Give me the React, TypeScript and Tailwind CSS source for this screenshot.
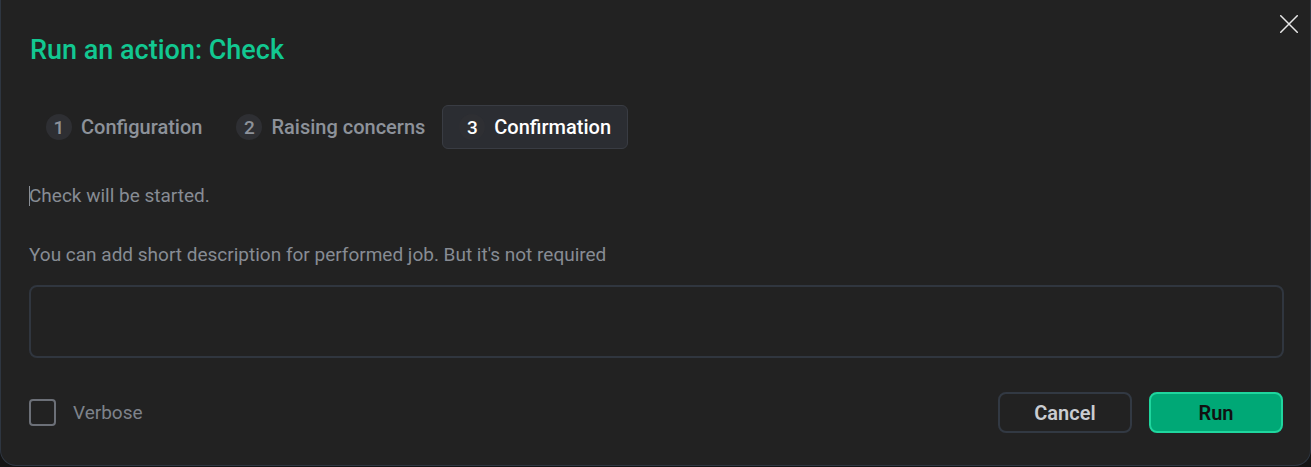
import React from "react";

function Step({ n, label, active }: { n: number; label: string; active?: boolean }) {
  return (
    <div
      className={
        "flex items-center gap-[9px] h-[44px] px-4 rounded-md border " +
        (active ? "bg-[#2b2d32] border-[#393c43]" : "border-transparent")
      }
    >
      <span
        className={
          "flex items-center justify-center w-[26px] h-[26px] rounded-full bg-[#2e2f33] text-[19px] leading-none font-medium " +
          (active ? "text-white" : "text-[#8d929a]")
        }
      >
        {n}
      </span>
      <span className={"text-[20px] leading-[24px] font-medium " + (active ? "text-white" : "text-[#8d929a]")}>{label}</span>
    </div>
  );
}

export default function App() {
  return (
    <div className="w-[1311px] h-[467px] bg-[#141414] overflow-hidden" style={{ fontFamily: "Roboto, 'Liberation Sans', sans-serif" }}>
      <div className="relative w-full h-[466px] bg-[#222222] rounded-b-[16px] border-b border-x border-[#2e3641] pl-[28px] pr-[26px] pt-[35px] flex flex-col">
        <button className="absolute right-[12px] top-[15px] w-[18px] h-[18px] text-[#e8e8e8]">
          <svg width="18" height="18" viewBox="0 0 18 18" fill="none" stroke="currentColor" strokeWidth="1.5" strokeLinecap="round">
            <path d="M0.75 0.75L17.25 17.25M17.25 0.75L0.75 17.25" />
          </svg>
        </button>
        <h1 className="text-[27px] leading-[30px] font-medium text-[#12c891] pl-[1px]">Run an action: Check</h1>
        <div className="flex items-center mt-[40px]">
          <Step n={1} label="Configuration" />
          <Step n={2} label="Raising concerns" />
          <Step n={3} label="Confirmation" active />
        </div>
        <div className="mt-[35px] flex items-center h-[24px]">
          <span className="w-px h-[20px] bg-[#8a8f96] -mr-px" />
          <span className="text-[19px] leading-[24px] text-[#878c94]">Check will be started.</span>
        </div>
        <p className="mt-[35px] text-[19px] leading-[24px] text-[#878c94]">
          You can add short description for performed job. But it's not required
        </p>
        <textarea className="mt-[18px] h-[73px] w-full rounded-lg border-2 border-[#30363f] bg-transparent resize-none outline-none" />
        <div className="mt-[34px] flex items-center justify-between">
          <label className="flex items-center gap-[17px]">
            <span className="w-[27px] h-[27px] rounded-[4px] border-2 border-[#6c7078]" />
            <span className="text-[19px] leading-[24px] text-[#7e838b]">Verbose</span>
          </label>
          <div className="flex items-center gap-[17px] pr-[1px]">
            <button className="w-[134px] h-[41px] rounded-lg border-2 border-[#323943] text-[20px] font-semibold text-[#c9ccd1]">
              Cancel
            </button>
            <button className="w-[134px] h-[41px] rounded-lg border-2 border-[#1fd69e] bg-[#00a876] text-[20px] font-semibold text-[#111]">
              Run
            </button>
          </div>
        </div>
      </div>
    </div>
  );
}
